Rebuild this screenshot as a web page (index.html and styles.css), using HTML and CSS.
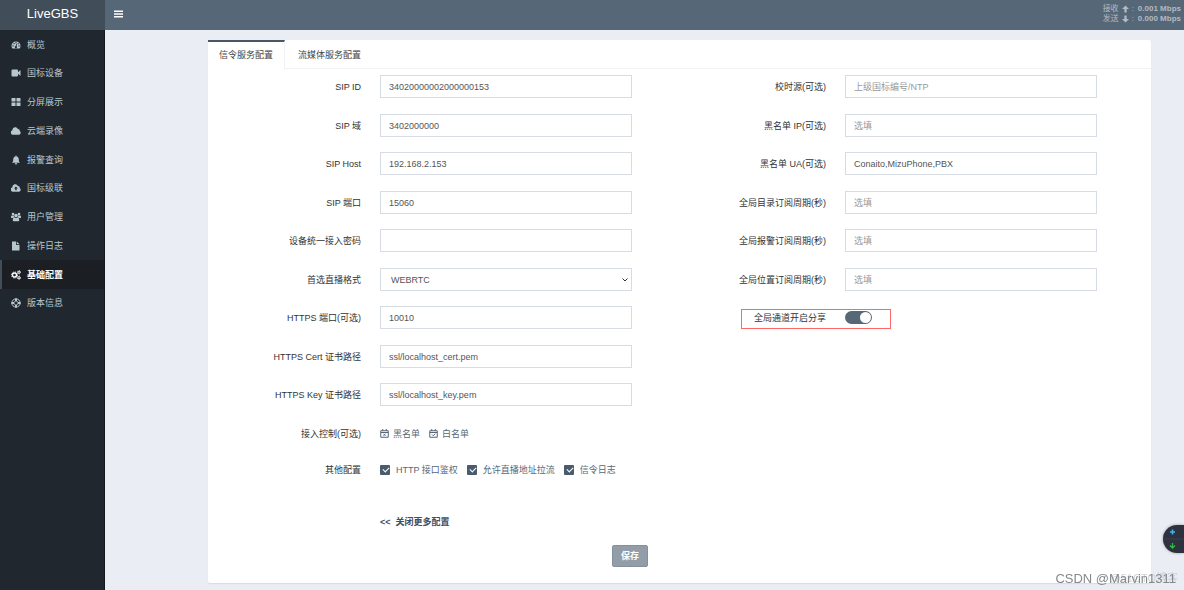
FILE: index.html
```html
<!DOCTYPE html>
<html lang="zh-CN">
<head>
<meta charset="utf-8">
<title>LiveGBS</title>
<link rel="stylesheet" href="styles.css">
</head>
<body>
<div class="app">
  <aside class="sidebar">
    <a class="brand" href="#">LiveGBS</a>
    <nav class="menu">
      <a class="menu-item" href="#"><svg class="icon" viewBox="0 0 20 20"><path fill-rule="evenodd" d="M2.600 17A9.300 9.300 0 0 1 1 11.800a9 9 0 0 1 18 0 9.300 9.300 0 0 1-1.600 5.200zM4 10.500a1.300 1.300 0 1 0 .1 2.600 1.300 1.300 0 0 0-.1-2.600zM6 6a1.300 1.300 0 1 0 .1 2.600A1.300 1.300 0 0 0 6 6zM10 4.200a1.300 1.300 0 1 0 .1 2.600 1.300 1.300 0 0 0-.1-2.600zM14.300 6a1.300 1.300 0 1 0 .1 2.600 1.300 1.300 0 0 0-.1-2.600zM16 10.500a1.300 1.300 0 1 0 .1 2.600 1.300 1.300 0 0 0-.1-2.600zM10.500 8l-1 4a2.200 2.200 0 1 0 1.600.4l1-4z"/></svg>概览</a>
      <a class="menu-item" href="#"><svg class="icon" viewBox="0 0 20 20"><path d="M3 3h9a2 2 0 0 1 2 2v3.500L19 4v12l-5-4.500V15a2 2 0 0 1-2 2H3a2 2 0 0 1-2-2V5a2 2 0 0 1 2-2z"/></svg>国标设备</a>
      <a class="menu-item" href="#"><svg class="icon" viewBox="0 0 20 20"><path d="M2 2h7v7H1V3q0-1 1-1zM11 2h7q1 0 1 1v6h-8zM1 11h8v7H2q-1 0-1-1zM11 11h8v6q0 1-1 1h-7z"/></svg>分屏展示</a>
      <a class="menu-item" href="#"><svg class="icon" viewBox="0 0 20 20"><path d="M4.500 17.500a4.500 4.500 0 0 1-1.700-8.800 5.800 5.800 0 0 1 11-2.900 3.300 3.300 0 0 1 3.500 4.200 4 4 0 0 1-1.300 7.500z"/></svg>云端录像</a>
      <a class="menu-item" href="#"><svg class="icon" viewBox="0 0 20 20"><path d="M9 1h2v2c3 .5 4.500 3 4.500 5.500 0 4 1 5.500 2.500 7H2c1.500-1.500 2.500-3 2.500-7C4.500 6 6 3.500 9 3zM7.500 16.500h5a2.500 2.500 0 0 1-5 0z"/></svg>报警查询</a>
      <a class="menu-item" href="#"><svg class="icon" viewBox="0 0 20 20"><path fill-rule="evenodd" d="M4.500 17.500a4.500 4.500 0 0 1-1.700-8.800 5.800 5.800 0 0 1 11-2.900 3.300 3.300 0 0 1 3.500 4.200 4 4 0 0 1-1.300 7.500zM9.800 6.800L6 11h2.500v3.500h2.700V11h2.500z"/></svg>国标级联</a>
      <a class="menu-item" href="#"><svg class="icon" viewBox="0 0 20 20"><circle cx="4" cy="4" r="2.600"/><circle cx="16" cy="4" r="2.600"/><circle cx="10" cy="7" r="3.600"/><path d="M0 11V9q0-2 2-2h3.500q.2 2.500 1.500 3.500-2 .3-3 1.500H1q-1 0-1-1zM20 11V9q0-2-2-2h-3.500q-.2 2.500-1.500 3.500 2 .3 3 1.500h3q1 0 1-1zM3.500 16.500c0-4 1.500-5.500 3.500-5.500q3 1.800 6 0c2 0 3.500 1.500 3.500 5.500q0 2-2 2h-9q-2 0-2-2z"/></svg>用户管理</a>
      <a class="menu-item" href="#"><svg class="icon" viewBox="0 0 20 20"><path d="M2 1h8v7h7v11H2zM11.500 1l5.500 5.500h-5.500z"/></svg>操作日志</a>
      <a class="menu-item active" href="#"><svg class="icon" viewBox="0 0 20 20"><g fill="none" stroke="currentColor"><circle cx="7" cy="10" r="4" stroke-width="2.800"/><circle cx="7" cy="10" r="6" stroke-width="2" stroke-dasharray="2.400 2.310"/><circle cx="16" cy="4.500" r="2.200" stroke-width="2"/><circle cx="16" cy="4.500" r="3.500" stroke-width="1.200" stroke-dasharray="1.900 1.760"/><circle cx="16" cy="15.500" r="2.200" stroke-width="2"/><circle cx="16" cy="15.500" r="3.500" stroke-width="1.200" stroke-dasharray="1.900 1.760"/></g></svg>基础配置</a>
      <a class="menu-item" href="#"><svg class="icon" viewBox="0 0 20 20"><g fill="none" stroke="currentColor"><circle cx="10" cy="10" r="8.300" stroke-width="2"/><circle cx="10" cy="10" r="4" stroke-width="1.600"/><path d="M10 1v5M10 14v5M1 10h5M14 10h5" stroke-width="4"/></g></svg>版本信息</a>
    </nav>
  </aside>
  <div class="main">
    <header class="topbar">
      <button class="toggle" type="button" aria-label="菜单"><svg class="bars" viewBox="0 0 9 8"><path d="M0 .500h9v1.400H0zM0 3.300h9v1.400H0zM0 6.100h9v1.400H0z"/></svg></button>
      <div class="traffic">
        <div class="rate"><span>接收</span><svg class="arrow" viewBox="0 0 8 8"><path d="M4 0l4 4H5.300v4H2.700V4H0z"/></svg><span>:</span><b>0.001 Mbps</b></div>
        <div class="rate"><span>发送</span><svg class="arrow" viewBox="0 0 8 8"><path d="M4 8l4-4H5.300V0H2.700v4H0z"/></svg><span>:</span><b>0.000 Mbps</b></div>
      </div>
    </header>
    <main class="content">
      <section class="panel">
        <nav class="tabs">
          <a class="tab current" href="#">信令服务配置</a>
          <a class="tab" href="#">流媒体服务配置</a>
        </nav>
        <form class="form">
          <div class="columns">
            <div class="column">
              <div class="field"><label for="sip-id">SIP ID</label><input class="control" id="sip-id" type="text" value="34020000002000000153"></div>
              <div class="field"><label for="sip-domain">SIP 域</label><input class="control" id="sip-domain" type="text" value="3402000000"></div>
              <div class="field"><label for="sip-host">SIP Host</label><input class="control" id="sip-host" type="text" value="192.168.2.153"></div>
              <div class="field"><label for="sip-port">SIP 端口</label><input class="control" id="sip-port" type="text" value="15060"></div>
              <div class="field"><label for="password">设备统一接入密码</label><input class="control" id="password" type="text"></div>
              <div class="field"><label for="format">首选直播格式</label><div class="select-box"><select class="control" id="format"><option>WEBRTC</option></select><svg class="chevron" viewBox="0 0 6 4"><path d="M.5.500L3 3 5.500.500"/></svg></div></div>
              <div class="field"><label for="https-port">HTTPS 端口(可选)</label><input class="control" id="https-port" type="text" value="10010"></div>
              <div class="field"><label for="cert">HTTPS Cert 证书路径</label><input class="control" id="cert" type="text" value="ssl/localhost_cert.pem"></div>
              <div class="field"><label for="key">HTTPS Key 证书路径</label><input class="control" id="key" type="text" value="ssl/localhost_key.pem"></div>
              <div class="field access"><span class="caption">接入控制(可选)</span>
                <div class="options">
                  <a class="option link" href="#"><svg class="cal" viewBox="0 0 18 18"><path d="M1.500 3.500h15v13h-15zM1.500 7h15M5.500 0v4M12.500 0v4"/><path d="M7 9.500l4 4M11 9.500l-4 4"/></svg>黑名单</a>
                  <a class="option link" href="#"><svg class="cal" viewBox="0 0 18 18"><path d="M1.500 3.500h15v13h-15zM1.500 7h15M5.500 0v4M12.500 0v4"/><path d="M6 11l2.500 2.500L12.500 9.500"/></svg>白名单</a>
                </div>
              </div>
              <div class="field"><span class="caption">其他配置</span>
                <div class="options">
                  <label class="option"><input class="check" type="checkbox" checked>HTTP 接口鉴权</label>
                  <label class="option"><input class="check" type="checkbox" checked>允许直播地址拉流</label>
                  <label class="option"><input class="check" type="checkbox" checked>信令日志</label>
                </div>
              </div>
            </div>
            <div class="column">
              <div class="field"><label for="ntp">校时源(可选)</label><input class="control" id="ntp" type="text" placeholder="上级国标编号/NTP"></div>
              <div class="field"><label for="black-ip">黑名单 IP(可选)</label><input class="control" id="black-ip" type="text" placeholder="选填"></div>
              <div class="field"><label for="black-ua">黑名单 UA(可选)</label><input class="control" id="black-ua" type="text" value="Conaito,MizuPhone,PBX"></div>
              <div class="field"><label for="catalog">全局目录订阅周期(秒)</label><input class="control" id="catalog" type="text" placeholder="选填"></div>
              <div class="field"><label for="alarm">全局报警订阅周期(秒)</label><input class="control" id="alarm" type="text" placeholder="选填"></div>
              <div class="field"><label for="position">全局位置订阅周期(秒)</label><input class="control" id="position" type="text" placeholder="选填"></div>
              <div class="field marked"><label for="share">全局通道开启分享</label><input class="switch" id="share" type="checkbox" role="switch" checked></div>
            </div>
          </div>
          <div class="columns more-row">
            <div class="field"><a class="more" href="#">&lt;&lt;&nbsp; 关闭更多配置</a></div>
          </div>
          <div class="actions"><button class="save" type="submit">保存</button></div>
        </form>
      </section>
    </main>
  </div>
</div>
<div class="widget"><svg class="widget-icons" viewBox="0 0 21 28"><path d="M0 14h21" stroke="#3d414c"/><path d="M9.500 4.500v5M7 7h5" stroke="#45b4ee" stroke-width="1.500"/><path d="M9.500 18v5M7 20.500L9.500 23l2.500-2.500" fill="none" stroke="#2fbd3b" stroke-width="1.300"/></svg></div>
<div class="watermark back">@51CTO博客</div>
<div class="watermark">CSDN @Marvin1311</div>
</body>
</html>
```
FILE: styles.css
```css
* { box-sizing: border-box; }
body {
  margin: 0;
  background: #eaedf3;
  color: #333;
  font: 9px/14px "Liberation Sans", "Noto Sans CJK SC", sans-serif;
}
a { color: inherit; text-decoration: none; }
input, select, button { font: inherit; margin: 0; }
.app { display: flex; min-height: 100vh; }

.sidebar { flex: none; width: 105px; background: #20272e; border-right: 1px solid #14191e; }
.brand {
  display: block;
  height: 30px;
  margin-right: -1px;
  background: #414d59;
  color: #fff;
  font-size: 13px;
  line-height: 28px;
  text-align: center;
}
.menu-item {
  display: flex;
  align-items: center;
  gap: 6px;
  height: 29px;
  padding-left: 9px;
  border-left: 2px solid transparent;
  color: #b8c7ce;
}
.menu-item:nth-child(4n + 2) { height: 28px; }
.menu-item.active { background: #1b1f23; border-left-color: #414d59; color: #fff; font-weight: bold; }
.icon { width: 10px; height: 10px; fill: currentColor; }

.main { flex: 1; min-width: 0; }
.topbar {
  display: flex;
  justify-content: space-between;
  align-items: center;
  height: 30px;
  padding: 0 3px 2px 9px;
  background: #566777;
}
.toggle { display: flex; padding: 0; border: 0; background: none; }
.bars { width: 9px; height: 8px; fill: #fff; }
.traffic { color: #b2bac2; font-size: 8px; line-height: 10px; }
.rate { display: flex; align-items: center; gap: 3px; }
.rate b { margin-left: 1px; }
.arrow { width: 7px; height: 8px; fill: currentColor; }

.content { padding: 10px 33px 6px 103px; }
.panel { background: #fff; border-radius: 2px; box-shadow: 0 1px 1px #d8dce2; }
.tabs { display: flex; height: 29px; border-bottom: 1px solid #f2f3f5; }
.tab { height: 29px; padding: 8px 13px 0; color: #444; }
.tab.current {
  padding: 6px 11px 0;
  border-top: 2px solid #4a5766;
  border-right: 1px solid #f0f1f4;
  background: #fff;
}
.form { padding: 6px 0 16px; }
.columns { display: grid; grid-template-columns: 1fr 1fr; column-gap: 41px; padding-right: 54px; }
.field {
  position: relative;
  display: grid;
  grid-template-columns: 153fr 252fr;
  column-gap: 19px;
  align-items: center;
  height: 23px;
  margin-bottom: 16px;
}
.field:nth-child(even) { margin-bottom: 15px; }
.field.access { margin-bottom: 13px; }
.field > label, .caption { text-align: right; }
.control {
  width: 100%;
  height: 23px;
  padding: 0 8px;
  border: 1px solid #d7dbe4;
  border-radius: 0;
  background: #fff;
  color: #555;
}
.select-box { position: relative; display: flex; }
.select-box .control { appearance: none; padding: 0 14px 0 10px; }
.chevron {
  position: absolute;
  top: 10px;
  right: 4px;
  width: 6px;
  height: 4px;
  fill: none;
  stroke: #333;
  pointer-events: none;
}
.control::placeholder { color: #999; opacity: 1; }
.options { display: flex; align-items: center; gap: 9px; color: #566777; white-space: nowrap; }
.option { display: flex; align-items: center; gap: 6px; }
.option.link { gap: 4px; }
.cal { width: 9px; height: 9px; fill: none; stroke: currentColor; stroke-width: 2; }
.check {
  appearance: none;
  width: 10px;
  height: 10px;
  border-radius: 1px;
  background: #495b6c;
}
.check::before {
  content: "";
  display: block;
  width: 3px;
  height: 5px;
  margin: 1px 0 0 4px;
  border: solid #fff;
  border-width: 0 1px 1px 0;
  transform: rotate(45deg);
}
.switch {
  appearance: none;
  display: flex;
  justify-content: flex-end;
  width: 27px;
  height: 13px;
  padding: 1px;
  border-radius: 7px;
  background: #566777;
}
.switch::before { content: ""; width: 11px; height: 11px; border-radius: 50%; background: #fff; }
.marked::after {
  content: "";
  position: absolute;
  top: 3px;
  left: 68px;
  width: 148px;
  height: 18px;
  border: 1px solid #f66;
}
.more-row { padding-top: 13px; }
.more { grid-column: 2; color: #3f4f60; font-weight: bold; }
.more-row .field { margin-bottom: 12px; }
.actions { display: flex; justify-content: center; padding-right: 99px; }
.save {
  height: 22px;
  padding: 0 8px;
  border: 1px solid #84909c;
  border-radius: 2px;
  background: #939da8;
  color: #fff;
  font-weight: bold;
}

.widget {
  position: fixed;
  right: 0;
  top: 525px;
  width: 21px;
  height: 28px;
  border-radius: 14px 0 0 14px;
  background: #2e323e;
  box-shadow: 0 0 3px #999;
}
.widget-icons { display: block; width: 21px; height: 28px; }
.watermark {
  position: fixed;
  right: 8px;
  bottom: 3px;
  color: #85888c;
  font-size: 13px;
  line-height: 16px;
}
.watermark.back { right: 6px; bottom: 4px; color: #d0d3d7; font-size: 11px; }
```
